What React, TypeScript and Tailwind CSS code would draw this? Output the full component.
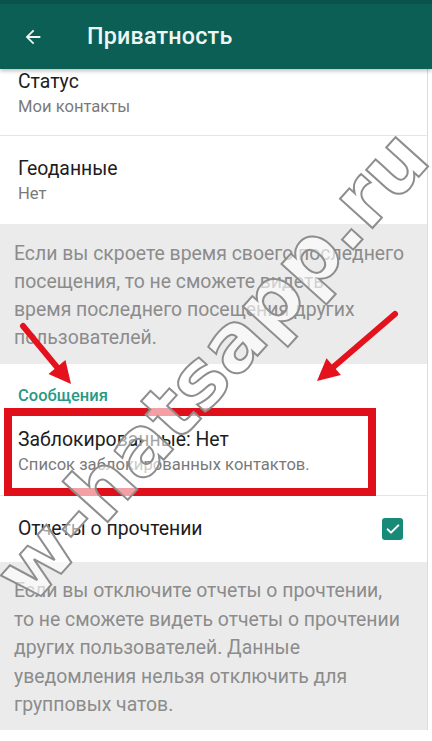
import React from "react";

const font = { fontFamily: "Roboto, 'Noto Sans', Arial, sans-serif" };

function Item({ title, subtitle }: { title: string; subtitle: string }) {
  return (
    <div>
      <div className="text-[19.4px] leading-[24px] text-[#1d1d1d]">{title}</div>
      <div className="mt-[2px] text-[16.6px] leading-[22px] text-[#7a7a7a]">{subtitle}</div>
    </div>
  );
}

function Arrow({ x1, y1, x2, y2 }: { x1: number; y1: number; x2: number; y2: number }) {
  const ang = Math.atan2(y2 - y1, x2 - x1);
  const len = 22;
  const w = 11;
  const bx = x2 - Math.cos(ang) * len;
  const by = y2 - Math.sin(ang) * len;
  const px = -Math.sin(ang) * w;
  const py = Math.cos(ang) * w;
  return (
    <g>
      <line x1={x1} y1={y1} x2={bx} y2={by} stroke="#e3121c" strokeWidth={6} strokeLinecap="round" />
      <polygon points={`${x2},${y2} ${bx + px},${by + py} ${bx - px},${by - py}`} fill="#e3121c" />
    </g>
  );
}

export default function App() {
  return (
    <div className="relative h-[741px] w-[432px] overflow-hidden bg-white" style={font}>
      <header className="relative z-10 flex h-[69px] items-center border-t-4 border-[#08544b] bg-[#0b5f55] shadow-[0_2px_4px_rgba(0,0,0,0.25)]">
        <svg className="ml-[22px]" width="22" height="22" viewBox="0 0 24 24">
          <path d="M20 11H7.83l5.59-5.59L12 4l-8 8 8 8 1.41-1.41L7.83 13H20v-2z" fill="#eef6f4" />
        </svg>
        <h1 className="ml-[43px] text-[23.3px] font-medium tracking-[0.2px] text-[#eef6f4]">Приватность</h1>
      </header>

      <div className="w-[428px] border-r border-[#dcdcdc]">
        <div className="border-b border-[#e6e6e6] pl-[18px] pt-[1px] pb-[17px]">
          <Item title="Статус" subtitle="Мои контакты" />
        </div>

        <div className="pl-[18px] pt-[21px] pb-[19px]">
          <Item title="Геоданные" subtitle="Нет" />
        </div>

        <div className="bg-[#ebebeb] pl-[14px] pt-[16px] pb-[12px] text-[19.4px] leading-[28px] whitespace-nowrap text-[#8c8c8c]">
          Если вы скроете время своего последнего
          <br />
          посещения, то не сможете видеть
          <br />
          время последнего посещения других
          <br />
          пользователей.
        </div>

        <div className="pl-[18px] pt-[22px] pb-[2px] text-[16.5px] font-medium leading-[20px] text-[#2a9985]">
          Сообщения
        </div>

        <div className="relative border-b border-[#e6e6e6] pl-[18px] pt-[20px] pb-[19px]">
          <Item title="Заблокированные: Нет" subtitle="Список заблокированных контактов." />
          <div className="absolute left-[4px] top-0 h-[88px] w-[372px] border-[8px] border-[#e0101b]" />
        </div>

        <div className="flex h-[66px] items-center justify-between pl-[18px] pr-[24px]">
          <div className="text-[19.4px] text-[#1d1d1d]">Отчеты о прочтении</div>
          <div className="flex h-[22px] w-[21px] items-center justify-center rounded-[3px] bg-[#178a78]">
            <svg width="16" height="16" viewBox="0 0 24 24">
              <path d="M4 12.5l5 5L20 6.5" fill="none" stroke="white" strokeWidth="3" strokeLinecap="round" strokeLinejoin="round" />
            </svg>
          </div>
        </div>

        <div className="bg-[#ebebeb] pl-[14px] pt-[15px] pb-[10px] text-[19.4px] leading-[28.5px] whitespace-nowrap text-[#8c8c8c]">
          Если вы отключите отчеты о прочтении,
          <br />
          то не сможете видеть отчеты о прочтении
          <br />
          других пользователей. Данные
          <br />
          уведомления нельзя отключить для
          <br />
          групповых чатов.
        </div>
      </div>

      <svg className="pointer-events-none absolute left-0 top-0" width="432" height="741">
        <Arrow x1={23} y1={326} x2={71} y2={384} />
        <Arrow x1={395} y1={314} x2={317} y2={381} />
      </svg>

      <div
        className="pointer-events-none absolute left-[212px] top-[366px] -translate-x-1/2 -translate-y-1/2 -rotate-[48deg] whitespace-nowrap text-[80px] font-bold leading-none text-white/60 [-webkit-text-stroke:2px_#8e8e8e]"
        style={{ fontFamily: "'DejaVu Sans', sans-serif" }}
      >
        w-hatsapp.ru
      </div>
    </div>
  );
}
